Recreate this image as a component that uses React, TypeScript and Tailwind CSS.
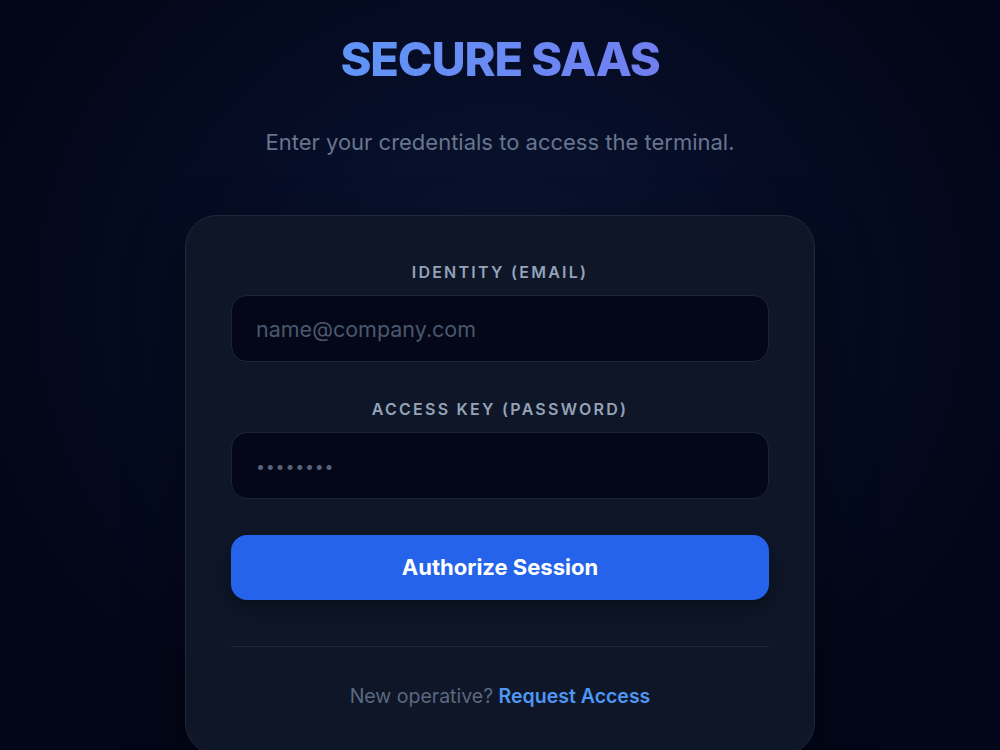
export default function App() {
  return (
    <div
      className="min-h-[750px] w-full overflow-hidden bg-[#020618] bg-[radial-gradient(ellipse_at_50%_40%,#0b1633_0%,#060d26_35%,#020618_75%)] flex flex-col items-center"
      style={{ fontFamily: "Inter, 'Noto Sans', sans-serif" }}
    >
      <h1 className="mt-[31px] text-[47px] leading-[56px] font-extrabold tracking-tight bg-gradient-to-r from-[#5f95f7] to-[#717ef0] bg-clip-text text-transparent">
        SECURE SAAS
      </h1>
      <p className="mt-[40px] text-[22px] leading-[30px] text-[#66768e]">
        Enter your credentials to access the terminal.
      </p>

      <div className="mt-[58px] w-[630px] rounded-[32px] border border-[#1e293b] bg-[#0e1628] px-[45px] pt-[46px] pb-[44px] shadow-[0_25px_60px_rgba(0,0,0,0.45)]">
        <form className="flex flex-col">
          <label className="text-center text-[16px] leading-5 font-semibold tracking-[0.14em] text-[#94a3b8]">
            IDENTITY (EMAIL)
          </label>
          <input
            type="email"
            placeholder="name@company.com"
            className="mt-[13px] h-[67px] w-full rounded-2xl border border-[#1c2638] bg-[#030717] px-6 text-[21.5px] text-slate-200 placeholder:text-[#4a586e] outline-none"
          />

          <label className="mt-[37px] text-center text-[16px] leading-5 font-semibold tracking-[0.14em] text-[#94a3b8]">
            ACCESS KEY (PASSWORD)
          </label>
          <input
            type="password"
            placeholder="••••••••"
            className="mt-[13px] h-[67px] w-full rounded-2xl border border-[#1c2638] bg-[#030717] px-6 text-[16px] tracking-[0.05em] text-slate-200 placeholder:text-[#56637a] outline-none"
          />

          <button
            type="button"
            className="mt-[36px] h-[65px] w-full rounded-2xl bg-[#2563eb] text-[22px] font-bold text-white shadow-[0_8px_20px_rgba(0,0,0,0.35)]"
          >
            Authorize Session
          </button>
        </form>

        <div className="mt-[46px] h-px w-full bg-[#1c2638]" />

        <p className="mt-[35px] text-center text-[19.5px] leading-7 text-[#5b6880]">
          New operative?{" "}
          <a href="#" className="font-semibold text-[#4f96f5]">
            Request Access
          </a>
        </p>
      </div>
    </div>
  );
}
